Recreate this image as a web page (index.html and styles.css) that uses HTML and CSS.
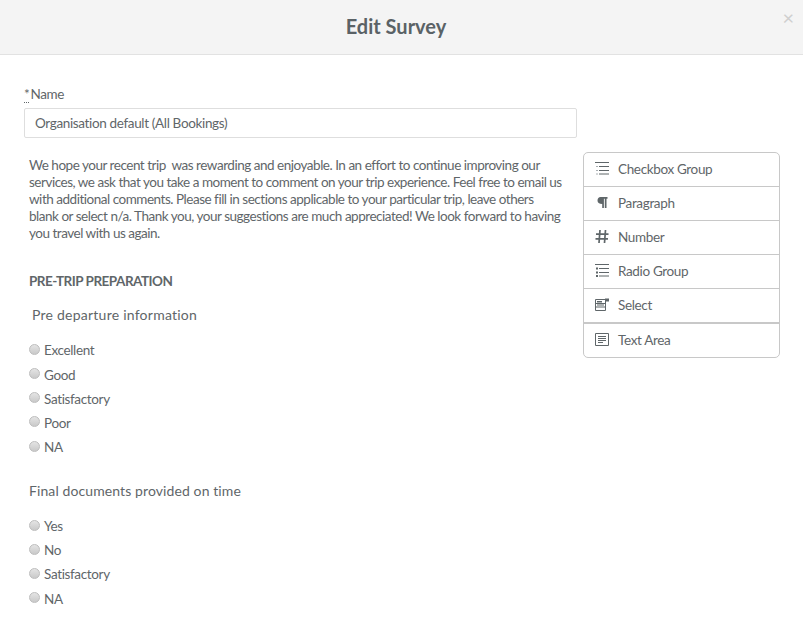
FILE: index.html
```html
<!DOCTYPE html>
<html lang="en">
<head>
    <meta charset="UTF-8">
    <meta name="viewport" content="width=device-width, initial-scale=1.0">
    <title>Edit Survey</title>
    <link rel="stylesheet" href="styles.css">
</head>
<body>
    <header class="modal-header">
        <h1>Edit Survey</h1>
        <button class="close-btn" type="button">×</button>
    </header>

    <main class="modal-body">
        <div class="name-field">
            <label for="name-input"><abbr>*</abbr>Name</label>
            <input id="name-input" type="text" value="Organisation default (All Bookings)">
        </div>

        <div class="builder">
            <div class="survey">
                <p class="intro">We hope your recent trip&nbsp; was rewarding and enjoyable. In an effort to continue improving our services, we ask that you take a moment to comment on your trip experience. Feel free to email us with additional comments. Please fill in sections applicable to your particular trip, leave others blank or select n/a. Thank you, your suggestions are much appreciated! We look forward to having you travel with us again.</p>

                <h2>PRE-TRIP PREPARATION</h2>

                <h3 class="question question-first">Pre departure information</h3>
                <div class="options">
                    <label><input type="radio" name="q1"> Excellent</label>
                    <label><input type="radio" name="q1"> Good</label>
                    <label><input type="radio" name="q1"> Satisfactory</label>
                    <label><input type="radio" name="q1"> Poor</label>
                    <label><input type="radio" name="q1"> NA</label>
                </div>

                <h3 class="question">Final documents provided on time</h3>
                <div class="options">
                    <label><input type="radio" name="q2"> Yes</label>
                    <label><input type="radio" name="q2"> No</label>
                    <label><input type="radio" name="q2"> Satisfactory</label>
                    <label><input type="radio" name="q2"> NA</label>
                </div>
            </div>

            <ul class="field-list">
                <li>
                    <svg viewBox="0 0 14 13"><path d="M0 0.500h14M4 4.500h10M4 8.500h10M4 12h10"/><path class="faint" d="M1 4.500h2M1 8.500h2M1 12h2"/></svg>
                    Checkbox Group
                </li>
                <li>
                    <svg viewBox="0 0 14 13"><path class="solid" d="M5.500 1H12.500V2.800H11.500V12H9.800V2.800H8.900V12H7.200V8C4 8 2.500 6.800 2.500 4.500 2.500 2.300 3.800 1 5.500 1z"/></svg>
                    Paragraph
                </li>
                <li>
                    <svg viewBox="0 0 14 13"><path class="thick" d="M5 0L4 13M10.500 0L9.500 13M1 4.200H13.500M0.500 8.800H13"/></svg>
                    Number
                </li>
                <li>
                    <svg viewBox="0 0 14 13"><path d="M0 0.500h14M4 4.500h10M4 8.500h10M4 12h10"/><path class="solid" d="M1 3.500h2v2H1zM1 7.500h2v2H1zM1 11h2v2H1z"/></svg>
                    Radio Group
                </li>
                <li>
                    <svg viewBox="0 0 14 13"><path d="M0.500 1.500h10v11h-10zM0.500 5.500h10M0.500 9h10"/><path class="solid" d="M2 3h5v1.500H2zM10 0.500h4v3h-4zM2 6.500h7v1H2z"/></svg>
                    Select
                </li>
                <li class="last">
                    <svg viewBox="0 0 14 13"><path d="M0.500 0.500h13v12h-13zM3 3.500h8M3 5.500h8M3 7.500h8M3 9.500h5"/></svg>
                    Text Area
                </li>
            </ul>
        </div>
    </main>
</body>
</html>
```

FILE: styles.css
```css
body {
    margin: 0;
    font-family: Lato, sans-serif;
    font-size: 13.5px;
    letter-spacing: -0.35px;
    color: #5f6669;
    background-color: #fff;
    overflow: hidden;
}
.modal-header {
    position: relative;
    height: 54px;
    background-color: #f4f4f4;
    border-bottom: 1px solid #e2e2e2;
    padding-right: 11px;
    text-align: center;
}
.modal-header h1 {
    margin: 0;
    font-size: 20px;
    font-weight: 700;
    letter-spacing: 0;
    line-height: 53px;
    color: #5a6266;
}
.close-btn {
    position: absolute;
    top: 8px;
    right: 9px;
    padding: 0;
    border: 0;
    background: none;
    color: #cfcfcf;
    font-family: Lato, sans-serif;
    font-size: 20px;
    line-height: 18px;
}
.modal-body {
    padding: 31px 23px 0 24px;
}
.name-field label {
    display: block;
    line-height: 17px;
    margin-bottom: 5px;
}
.name-field abbr {
    margin-right: 1px;
    border-bottom: 1px dotted #5f6669;
}
.name-field input {
    display: block;
    box-sizing: border-box;
    width: 553px;
    height: 30px;
    padding: 0 10px;
    border: 1px solid #dedede;
    border-radius: 2px;
    font-family: Lato, sans-serif;
    font-size: 13.5px;
    letter-spacing: -0.35px;
    color: #5f6669;
}
.builder {
    display: flex;
    align-items: flex-start;
    margin-top: 14px;
}
.survey {
    width: 554px;
    margin-right: 5px;
    padding-left: 5px;
    box-sizing: border-box;
}
.intro {
    width: 535px;
    margin: 5px 0 0;
    line-height: 17px;
    letter-spacing: -0.48px;
}
.survey h2 {
    margin: 31px 0 0;
    font-size: 13.5px;
    font-weight: 700;
    letter-spacing: -0.5px;
    line-height: 17px;
}
.question {
    margin: 16px 0 0;
    font-size: 14px;
    font-weight: 400;
    line-height: 17px;
    letter-spacing: 0.1px;
}
.question-first {
    padding-left: 3px;
    letter-spacing: 0.24px;
}
.options {
    margin-top: 15.3px;
}
.options + .question {
    margin-top: 23.2px;
}
.options + .question + .options {
    margin-top: 14.6px;
}
.options label {
    display: flex;
    align-items: center;
    gap: 4px;
    height: 24.2px;
}
.options input {
    appearance: none;
    width: 11px;
    height: 11px;
    margin: -2px 0 0;
    border: 1px solid #bdbdbd;
    border-radius: 50%;
    background: linear-gradient(#e4e4e4, #c9c9c9);
}
.field-list {
    list-style: none;
    margin: 0;
    padding: 0;
    width: 197px;
    box-sizing: border-box;
    border: 1px solid #c8c8c8;
    border-radius: 5px;
}
.field-list li {
    display: flex;
    align-items: center;
    height: 31px;
    border-bottom: 1px solid #c8c8c8;
    padding: 0 0 2px 11px;
}
.field-list li:nth-child(5) {
    border-bottom-width: 2px;
}
.field-list li.last {
    border-bottom: 0;
}
.field-list svg {
    flex: none;
    width: 14px;
    height: 13px;
    margin-right: 9px;
    fill: none;
    stroke: #5f6669;
    stroke-width: 1;
}
.field-list .solid {
    fill: #5f6669;
    stroke: none;
}
.field-list .thick {
    stroke-width: 1.7;
}
.field-list .faint {
    stroke: #a9afb2;
}
```
